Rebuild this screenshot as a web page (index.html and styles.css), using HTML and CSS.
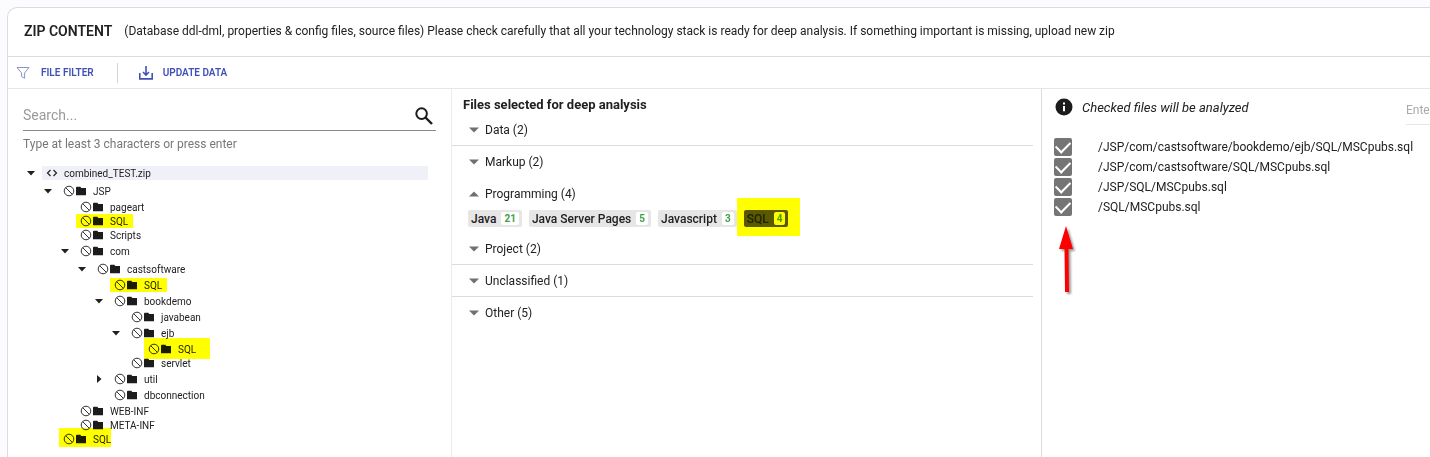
FILE: index.html
```html
<!DOCTYPE html>
<html lang="en">
<head>
    <meta charset="UTF-8">
    <meta name="viewport" content="width=device-width, initial-scale=1.0">
    <title>Zip content</title>
    <link rel="stylesheet" href="styles.css">
</head>
<body>

    <!-- Shared icons -->
    <svg class="sprite" aria-hidden="true">
        <symbol id="ban" viewBox="0 0 12 12">
            <circle cx="6" cy="6" r="4.8" fill="none" stroke="#333" stroke-width="1"/>
            <path d="M2.6 2.6 9.4 9.4" stroke="#333" stroke-width="1"/>
        </symbol>
        <symbol id="folder" viewBox="0 0 12 12">
            <path d="M1 3V10.2H11V3H6.3L5.3 1.8H1.8Q1 1.8 1 3Z" fill="#1c1c1c"/>
        </symbol>
        <symbol id="down" viewBox="0 0 10 10">
            <path d="M1 3H9L5 7.5Z" fill="currentColor"/>
        </symbol>
        <symbol id="down-wide" viewBox="0 0 10 10">
            <path d="M0 2.5H10L5 7.5Z" fill="currentColor"/>
        </symbol>
        <symbol id="up" viewBox="0 0 10 10">
            <path d="M0 7.5H10L5 2.5Z" fill="currentColor"/>
        </symbol>
        <symbol id="right" viewBox="0 0 10 10">
            <path d="M3 1V9L7.5 5Z" fill="currentColor"/>
        </symbol>
    </svg>

    <main class="card">
        <header class="card-header">
            <h1>ZIP CONTENT</h1>
            <p>(Database ddl-dml, properties &amp; config files, source files) Please check carefully that all your technology stack is ready for deep analysis. If something important is missing, upload new zip</p>
        </header>

        <div class="toolbar">
            <button type="button" class="tool">
                <svg class="icon-filter" viewBox="0 0 14 14"><path d="M1 1.5H13L8.6 7V12.3L5.6 10.6V7Z" fill="none" stroke="#8c96cc" stroke-width="1"/></svg>
                FILE FILTER
            </button>
            <span class="divider"></span>
            <button type="button" class="tool">
                <svg class="icon-update" viewBox="0 0 14 14"><path d="M.8 7V12.9H13.2V7M7 0V8.6M4 6 7 9 10 6" fill="none" stroke="#3f51b5" stroke-width="1.6"/></svg>
                UPDATE DATA
            </button>
        </div>

        <div class="panels">
            <!-- File tree -->
            <section class="panel panel-tree">
                <div class="search">
                    <input id="search" type="text" placeholder="Search..." aria-label="Search" aria-describedby="search-hint">
                    <button type="button" aria-label="Run search">
                        <svg viewBox="0 0 18 18"><circle cx="6.6" cy="6.6" r="5.3" fill="none" stroke="#1c1c1c" stroke-width="2"/><path d="M10.5 10.5 17 17" stroke="#1c1c1c" stroke-width="2.4"/></svg>
                    </button>
                </div>
                <div class="hint" id="search-hint">Type at least 3 characters or press enter</div>

                <ul class="tree">
                    <li>
                        <div class="node root">
                            <button type="button" class="caret" aria-label="Collapse"><svg><use href="#down"/></svg></button>
                            <span class="label"><svg viewBox="0 0 12 12"><path d="M4.500 3 1.500 6 4.500 9M7.500 3 10.500 6 7.500 9" fill="none" stroke="#222" stroke-width="1.2"/></svg><span class="name">combined_TEST.zip</span></span>
                        </div>
                        <ul>
                            <li>
                                <div class="node parent">
                                    <button type="button" class="caret" aria-label="Collapse"><svg><use href="#down"/></svg></button>
                                    <span class="label"><svg><use href="#ban"/></svg><svg><use href="#folder"/></svg><span class="name">JSP</span></span>
                                </div>
                                <ul>
                                    <li><div class="node leaf"><span class="label"><svg><use href="#ban"/></svg><svg><use href="#folder"/></svg><span class="name">pageart</span></span></div></li>
                                    <li><div class="node leaf"><span class="label"><svg><use href="#ban"/></svg><svg><use href="#folder"/></svg><span class="name">SQL</span><span class="marker marker-row"></span></span></div></li>
                                    <li><div class="node leaf"><span class="label"><svg><use href="#ban"/></svg><svg><use href="#folder"/></svg><span class="name">Scripts</span></span></div></li>
                                    <li>
                                        <div class="node parent">
                                            <button type="button" class="caret" aria-label="Collapse"><svg><use href="#down"/></svg></button>
                                            <span class="label"><svg><use href="#ban"/></svg><svg><use href="#folder"/></svg><span class="name">com</span></span>
                                        </div>
                                        <ul class="spaced">
                                            <li>
                                                <div class="node parent">
                                                    <button type="button" class="caret" aria-label="Collapse"><svg><use href="#down"/></svg></button>
                                                    <span class="label"><svg><use href="#ban"/></svg><svg><use href="#folder"/></svg><span class="name">castsoftware</span></span>
                                                </div>
                                                <ul>
                                                    <li><div class="node leaf"><span class="label"><svg><use href="#ban"/></svg><svg><use href="#folder"/></svg><span class="name">SQL</span><span class="marker marker-row"></span></span></div></li>
                                                    <li>
                                                        <div class="node parent">
                                                            <button type="button" class="caret" aria-label="Collapse"><svg><use href="#down"/></svg></button>
                                                            <span class="label"><svg><use href="#ban"/></svg><svg><use href="#folder"/></svg><span class="name">bookdemo</span></span>
                                                        </div>
                                                        <ul>
                                                            <li><div class="node leaf"><span class="label"><svg><use href="#ban"/></svg><svg><use href="#folder"/></svg><span class="name">javabean</span></span></div></li>
                                                            <li>
                                                                <div class="node parent">
                                                                    <button type="button" class="caret" aria-label="Collapse"><svg><use href="#down"/></svg></button>
                                                                    <span class="label"><svg><use href="#ban"/></svg><svg><use href="#folder"/></svg><span class="name">ejb</span></span>
                                                                </div>
                                                                <ul>
                                                                    <li><div class="node leaf"><span class="label"><svg><use href="#ban"/></svg><svg><use href="#folder"/></svg><span class="name">SQL</span><span class="marker marker-wide"></span></span></div></li>
                                                                </ul>
                                                            </li>
                                                            <li><div class="node leaf"><span class="label"><svg><use href="#ban"/></svg><svg><use href="#folder"/></svg><span class="name">servlet</span></span></div></li>
                                                        </ul>
                                                    </li>
                                                    <li>
                                                        <div class="node parent">
                                                            <button type="button" class="caret" aria-label="Expand"><svg><use href="#right"/></svg></button>
                                                            <span class="label"><svg><use href="#ban"/></svg><svg><use href="#folder"/></svg><span class="name">util</span></span>
                                                        </div>
                                                    </li>
                                                    <li><div class="node leaf"><span class="label"><svg><use href="#ban"/></svg><svg><use href="#folder"/></svg><span class="name">dbconnection</span></span></div></li>
                                                </ul>
                                            </li>
                                        </ul>
                                    </li>
                                    <li><div class="node leaf"><span class="label"><svg><use href="#ban"/></svg><svg><use href="#folder"/></svg><span class="name">WEB-INF</span></span></div></li>
                                    <li><div class="node leaf"><span class="label"><svg><use href="#ban"/></svg><svg><use href="#folder"/></svg><span class="name">META-INF</span></span></div></li>
                                </ul>
                            </li>
                            <li><div class="node leaf"><span class="label"><svg><use href="#ban"/></svg><svg><use href="#folder"/></svg><span class="name">SQL</span><span class="marker marker-tall"></span></span></div></li>
                        </ul>
                    </li>
                </ul>
            </section>

            <!-- Technologies -->
            <section class="panel panel-types">
                <h2>Files selected for deep analysis</h2>
                <button type="button" class="group lined"><svg><use href="#down-wide"/></svg>Data (2)</button>
                <button type="button" class="group"><svg><use href="#down-wide"/></svg>Markup (2)</button>
                <button type="button" class="group"><svg><use href="#up"/></svg>Programming (4)</button>
                <div class="chips">
                    <button type="button" class="chip">Java <span class="count">21</span></button>
                    <button type="button" class="chip">Java Server Pages <span class="count">5</span></button>
                    <button type="button" class="chip">Javascript <span class="count">3</span></button>
                    <button type="button" class="chip selected">SQL <span class="count">4</span><span class="marker marker-chip"></span></button>
                </div>
                <button type="button" class="group lined"><svg><use href="#down-wide"/></svg>Project (2)</button>
                <button type="button" class="group lined"><svg><use href="#down-wide"/></svg>Unclassified (1)</button>
                <button type="button" class="group"><svg><use href="#down-wide"/></svg>Other (5)</button>
            </section>

            <!-- Files to analyze -->
            <section class="panel panel-files">
                <div class="files-head">
                    <svg class="icon-info" viewBox="0 0 18 18"><circle cx="9" cy="9" r="8.5" fill="#1c1c1c"/><path d="M8 4.5H10V6.5H8ZM8 8H10V13.2H8Z" fill="#fff"/></svg>
                    <em>Checked files will be analyzed</em>
                    <input class="files-filter" type="text" placeholder="Enter" aria-label="Filter files">
                </div>
                <div class="files">
                    <label><input type="checkbox" checked><span>/JSP/com/castsoftware/bookdemo/ejb/SQL/MSCpubs.sql</span></label>
                    <label><input type="checkbox" checked><span>/JSP/com/castsoftware/SQL/MSCpubs.sql</span></label>
                    <label><input type="checkbox" checked><span>/JSP/SQL/MSCpubs.sql</span></label>
                    <label><input type="checkbox" checked><span>/SQL/MSCpubs.sql</span></label>
                    <svg class="pointer" viewBox="0 0 20 70"><path d="M8 1 15 24H10.500L11 67H7L6.500 24H1Z" fill="#f00"/></svg>
                </div>
            </section>
        </div>
    </main>

</body>
</html>
```
FILE: styles.css
```css
* {
    box-sizing: border-box;
}
body {
    margin: 0;
    padding: 7px 0 0 7px;
    min-height: 100vh;
    display: flex;
    overflow: hidden;
    background: #fcfcfe;
    color: #212121;
    font-family: Roboto, Arial, sans-serif;
    font-size: 12px;
}
button {
    margin: 0;
    padding: 0;
    border: 0;
    background: none;
    color: inherit;
    font: inherit;
    cursor: pointer;
}
input {
    font: inherit;
    outline: none;
}
svg {
    display: block;
    flex: none;
}
.sprite {
    position: absolute;
    width: 0;
    height: 0;
}

.card {
    flex: 1;
    min-width: 0;
    display: flex;
    flex-direction: column;
    border: 1px solid #dcdcdc;
    border-width: 1px 0 0 1px;
    border-radius: 10px 0 0 0;
    background: #fff;
}
.card-header {
    display: flex;
    align-items: center;
    gap: 12px;
    height: 49px;
    padding: 0 16px 3px;
    border-bottom: 1px solid #dcdcdc;
    white-space: nowrap;
}
.card-header h1 {
    margin: 0;
    font-size: 14px;
    font-weight: 600;
}
.card-header p {
    margin: 0;
    font-size: 12px;
}

.toolbar {
    display: flex;
    align-items: center;
    height: 32px;
    padding-left: 8px;
    border-bottom: 1px solid #e6e6e6;
}
.tool {
    display: flex;
    align-items: center;
    color: #3f51b5;
    font-size: 10px;
    font-weight: 600;
}
.icon-filter {
    width: 14px;
    height: 14px;
    margin-right: 11px;
}
.icon-update {
    width: 14px;
    height: 14px;
    margin-right: 10px;
}
.divider {
    width: 1px;
    height: 20px;
    margin: 0 21px 0 23px;
    background: #d5d5d5;
}

.panels {
    flex: 1;
    display: grid;
    grid-template-columns: 444fr 590fr 388fr;
}
.panel {
    min-width: 0;
    border-right: 1px solid #dcdcdc;
}
.panel-tree {
    padding: 12px 15px 0;
    border-color: #ececec;
}
.search {
    display: flex;
    align-items: center;
    height: 30px;
    border-bottom: 1px solid #8a8a8a;
}
.search input {
    flex: 1;
    min-width: 0;
    padding: 0 0 2px;
    border: 0;
    font-size: 14px;
}
.search input::placeholder {
    color: #9a9a9a;
}
.search button {
    margin-right: 3px;
}
.search button svg {
    width: 18px;
    height: 18px;
}
.hint {
    margin-top: 6px;
    color: #777;
    font-size: 12px;
    line-height: 14px;
}

.tree,
.tree ul {
    margin: 0;
    padding: 0;
    list-style: none;
}
.tree {
    margin: 13px 8px 0 0;
}
.tree ul {
    padding-left: 17px;
}
.tree .spaced {
    padding-bottom: 2px;
}
.node {
    display: flex;
    align-items: center;
    height: 18px;
    padding-left: 19px;
    font-size: 10px;
}
.node.leaf {
    height: 14px;
}
.node.root,
.node.parent {
    padding-left: 0;
}
.caret {
    width: 16px;
    height: 10px;
    margin-right: 3px;
}
.caret svg {
    width: 10px;
    height: 10px;
    margin: 0 auto;
}
.label {
    position: relative;
    display: flex;
    align-items: center;
    height: 14px;
    padding-left: 4px;
}
.label svg {
    width: 12px;
    height: 12px;
}
.root .label {
    flex: 1;
    background: #f0f0f9;
}
.name {
    margin-left: 6px;
}

/* Yellow highlighter */
.marker {
    position: absolute;
    background: #ff0;
    mix-blend-mode: multiply;
}
.marker-row {
    inset: 0 -5px 0 0;
}
.marker-wide {
    inset: -4px -14px -3px 0;
}
.marker-tall {
    inset: -4px 0 -1px 0;
}
.marker-chip {
    inset: -12px -12px -9px -7px;
}

.panel-types {
    padding-right: 8px;
}
.panel-types h2 {
    margin: 0;
    padding: 8px 0 1px 11px;
    font-size: 13px;
    font-weight: 700;
    line-height: 16px;
}
.group {
    display: flex;
    align-items: center;
    width: 100%;
    height: 32px;
    padding-left: 17px;
    border-bottom: 1px solid transparent;
}
.group.lined {
    border-color: #dcdcdc;
}
.group svg {
    width: 10px;
    height: 10px;
    margin-right: 6px;
    color: #707070;
}
.chips {
    display: flex;
    gap: 7px;
    height: 23px;
    padding-left: 16px;
}
.chip {
    position: relative;
    display: flex;
    align-items: center;
    gap: 5px;
    height: 17px;
    padding: 0 3px;
    border-radius: 2px;
    background: #e6e6e6;
    font-weight: 500;
}
.chip.selected {
    background: #595959;
}
.count {
    height: 13px;
    padding: 0 3px;
    border-radius: 2px;
    background: #fff;
    color: #43a047;
    font-size: 10px;
    font-weight: 700;
    line-height: 13px;
}

.panel-files {
    border-right: 0;
    padding-left: 12px;
}
.files-head {
    display: flex;
    align-items: center;
    height: 36px;
    padding-left: 1px;
}
.icon-info {
    width: 18px;
    height: 18px;
}
.files-head em {
    margin-left: 9px;
    font-size: 13px;
    white-space: nowrap;
}
.files-filter {
    width: 24px;
    height: 30px;
    margin: 6px 0 0 auto;
    padding: 0;
    border: 0;
    border-bottom: 1px solid #e6e6e6;
    background: none;
}
.files-filter::placeholder {
    color: #aaa;
}
.files {
    position: relative;
    padding-top: 12px;
}
.files label {
    display: flex;
    align-items: center;
    height: 20px;
    white-space: nowrap;
}
.files input {
    appearance: none;
    width: 18px;
    height: 18px;
    margin: 0 26px 0 0;
    border-radius: 2px;
    background: #757575;
    display: flex;
    align-items: center;
    justify-content: center;
}
.files input:checked::before {
    content: "";
    width: 12px;
    height: 7px;
    margin-bottom: 4px;
    border: solid #fff;
    border-width: 0 0 2px 2px;
    transform: rotate(-45deg);
}
.pointer {
    position: absolute;
    top: 100px;
    left: 4px;
    width: 20px;
    height: 70px;
    filter: drop-shadow(2px 2px 1px rgba(0, 0, 0, 0.4));
}
```
